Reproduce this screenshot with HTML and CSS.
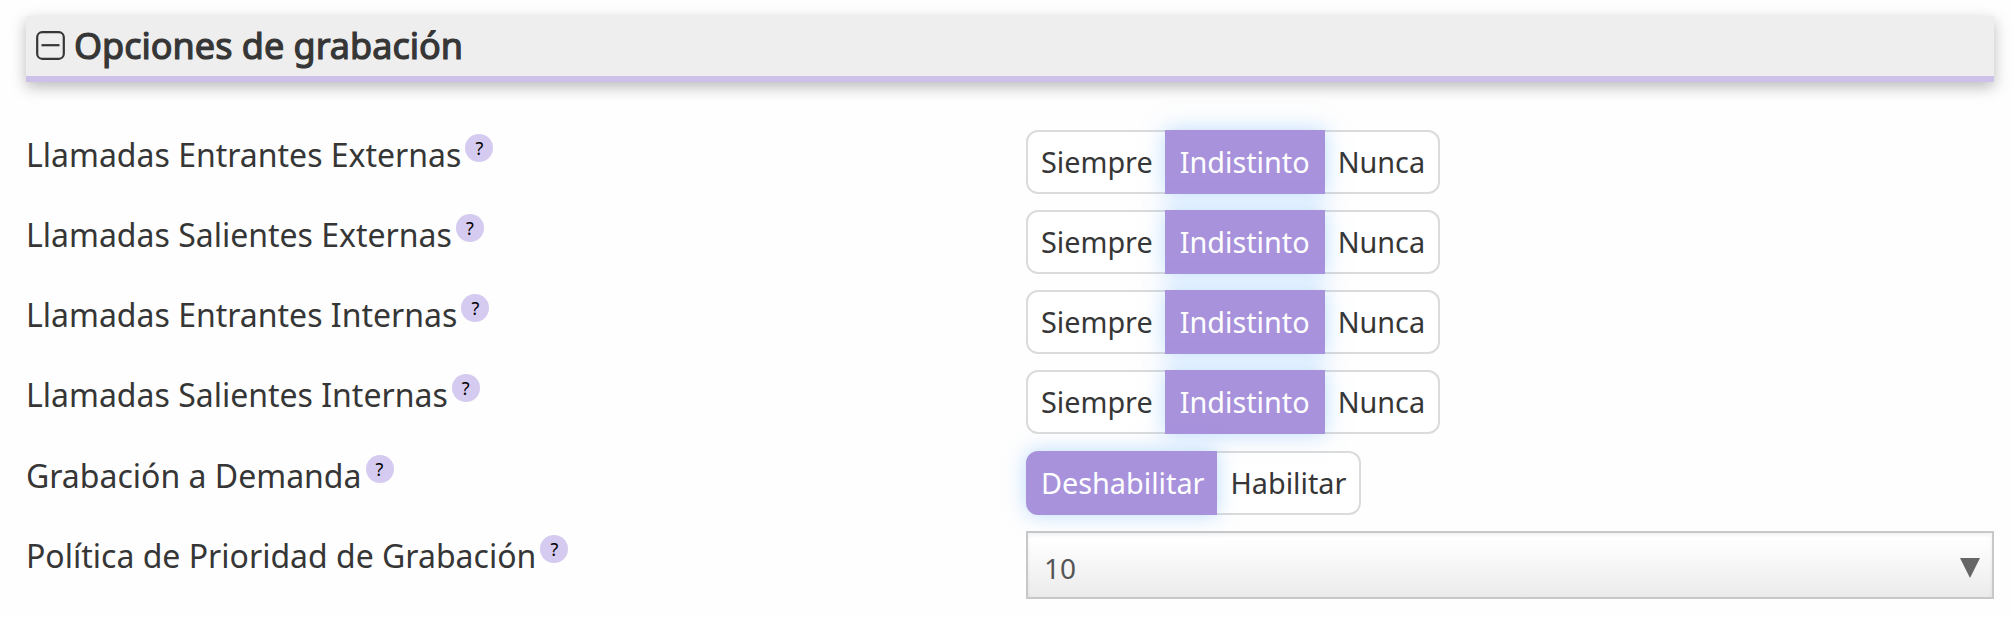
FILE: index.html
```html
<!DOCTYPE html>
<html lang="es">
<head>
  <meta charset="UTF-8">
  <meta name="viewport" content="width=device-width, initial-scale=1.0">
  <title>Opciones de grabación</title>
  <link rel="stylesheet" href="styles.css">
</head>
<body>
  <div class="section-title">
    <svg class="toggle" width="29" height="29" viewBox="0 0 29 29">
      <rect x="1.2" y="1.2" width="26.6" height="26.6" rx="5" fill="none" stroke="#363636" stroke-width="2.2"/>
      <path d="M5.5 14.2h18" stroke="#363636" stroke-width="2.2"/>
    </svg>
    <h3>Opciones de grabación</h3>
  </div>

  <div class="options">
    <div class="row">
      <label>Llamadas Entrantes Externas</label><span class="help">?</span>
      <div class="radioset">
        <span class="btn">Siempre</span><span class="btn active">Indistinto</span><span class="btn">Nunca</span>
      </div>
    </div>
    <div class="row">
      <label>Llamadas Salientes Externas</label><span class="help">?</span>
      <div class="radioset">
        <span class="btn">Siempre</span><span class="btn active">Indistinto</span><span class="btn">Nunca</span>
      </div>
    </div>
    <div class="row">
      <label>Llamadas Entrantes Internas</label><span class="help">?</span>
      <div class="radioset">
        <span class="btn">Siempre</span><span class="btn active">Indistinto</span><span class="btn">Nunca</span>
      </div>
    </div>
    <div class="row">
      <label>Llamadas Salientes Internas</label><span class="help">?</span>
      <div class="radioset">
        <span class="btn">Siempre</span><span class="btn active">Indistinto</span><span class="btn">Nunca</span>
      </div>
    </div>
    <div class="row row-demand">
      <label>Grabación a Demanda</label><span class="help">?</span>
      <div class="radioset">
        <span class="btn active">Deshabilitar</span><span class="btn">Habilitar</span>
      </div>
    </div>
    <div class="row">
      <label>Política de Prioridad de Grabación</label><span class="help">?</span>
      <div class="select">
        <span>10</span>
        <svg width="20" height="20" viewBox="0 0 20 20"><path d="M0 0h20L10 20z" fill="#666"/></svg>
      </div>
    </div>
  </div>
</body>
</html>
```
FILE: styles.css
```css
* {
  box-sizing: border-box;
}

body {
  margin: 0;
  padding: 16px 18px 0 26px;
  background: #fefefe;
  color: #363636;
  font-family: "Noto Sans", sans-serif;
  overflow: hidden;
}

/* Section header */
.section-title {
  display: flex;
  align-items: flex-start;
  height: 66px;
  padding: 0 10px;
  background: #eee;
  border-bottom: 6px solid #cdc1ea;
  box-shadow: 0 5px 14px rgba(0, 0, 0, 0.27);
}

.toggle {
  flex: none;
  margin-top: 15px;
}

.section-title h3 {
  margin: 0 0 0 9px;
  font-size: 36px;
  font-weight: 400;
  line-height: 60px;
  -webkit-text-stroke: 1.2px #363636;
}

/* Option rows */
.options {
  padding-top: 48px;
}

.row {
  display: flex;
  align-items: flex-start;
  height: 80px;
}

.row-demand {
  height: 81px;
  padding-top: 1px;
}

.row label {
  font-size: 32px;
  line-height: 50px;
  white-space: nowrap;
}

.help {
  width: 28px;
  height: 28px;
  margin: 4px 0 0 4px;
  border-radius: 50%;
  background: #d5caef;
  color: #000;
  font-size: 18px;
  line-height: 28px;
  text-align: center;
}

.radioset,
.select {
  width: 968px;
  margin-left: auto;
}

.radioset {
  display: flex;
}

.btn {
  height: 64px;
  padding: 0 13px;
  border: 2px solid #dbdbdb;
  background: #fff;
  font-size: 28.8px;
  line-height: 60px;
}

.btn + .btn {
  margin-left: -3px;
}

.btn:first-child {
  border-radius: 12px 0 0 12px;
}

.btn:last-child {
  border-radius: 0 12px 12px 0;
}

.btn.active {
  position: relative;
  border-color: #a992dc;
  background: #a992dc;
  color: #fff;
  box-shadow: 0 0 20px rgba(120, 185, 255, 0.5);
}

.btn.active:first-child {
  padding-right: 11px;
}

.btn.active + .btn {
  margin-left: -2px;
}

/* Priority select */
.select {
  display: flex;
  align-items: center;
  justify-content: space-between;
  height: 68px;
  padding: 6px 12px 0 16px;
  border: 2px solid #c8c8c8;
  background: linear-gradient(#fff 10%, #ebebeb);
  box-shadow: inset 0 2px 4px rgba(0, 0, 0, 0.06);
  color: #555;
  font-size: 28px;
}
```
